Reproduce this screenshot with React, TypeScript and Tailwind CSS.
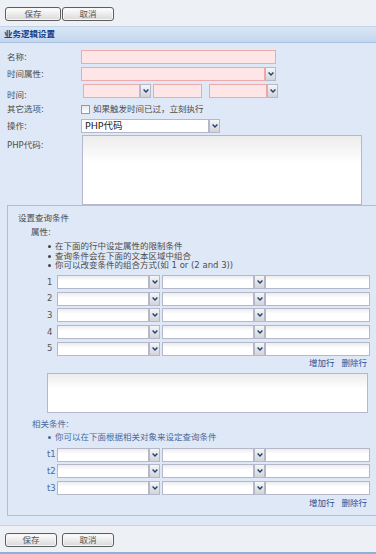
import React from 'react';

const FONT = { fontFamily: '"DejaVu Sans", "Noto Sans CJK SC", sans-serif' };

function Chevron() {
  return (
    <svg width="6" height="4" viewBox="0 0 6 4">
      <path d="M0.6 0.6 L3 3 L5.4 0.6" stroke="#1e3f7a" strokeWidth="1.4" fill="none" />
    </svg>
  );
}

function Trigger() {
  return (
    <div className="w-[11px] h-full shrink-0 bg-linear-to-b from-[#f6f6f6] to-[#d2d4d8] border border-[#b5b8c8] flex items-center justify-center">
      <Chevron />
    </div>
  );
}

function Field({ w, pink, className = '' }: { w: string; pink?: boolean; className?: string }) {
  return (
    <div
      className={`${w} h-full shrink-0 border ${pink ? 'bg-[#ffe6e6] border-[#eeaaaa]' : 'bg-linear-to-b from-[#ececec] to-white to-40% border-[#b5b8c8]'} ${className}`}
    />
  );
}

function Btn({ label, w }: { label: string; w: string }) {
  return (
    <button
      type="button"
      className={`${w} h-[14px] rounded-[3px] border border-[#5e5e5e] bg-linear-to-b from-white to-[#d9d9d9] text-[8.5px] leading-none text-[#555] flex items-center justify-center shadow-[inset_0_0_0_1px_#f6f6f6]`}
    >
      {label}
    </button>
  );
}

function Row({ n, blue }: { n: string; blue?: boolean }) {
  return (
    <div className="flex items-center h-[14px]">
      <span className={`w-[10px] text-[8.5px] ${blue ? 'text-[#4a6aa0]' : 'text-[#555]'}`}>{n}</span>
      <Field w="w-[92px]" />
      <Trigger />
      <div className="w-[2px]" />
      <Field w="w-[92px]" />
      <Trigger />
      <Field w="w-[105px]" />
    </div>
  );
}

function Links() {
  return (
    <div className="h-[12px] flex items-center justify-end gap-[7px] pr-[9px] text-[8.5px] text-[#2d4f8e]">
      <span>增加行</span>
      <span>删除行</span>
    </div>
  );
}

export default function App() {
  return (
    <div className="w-[376px] h-[554px] bg-[#dfe8f6] flex flex-col overflow-hidden text-[8.5px] text-[#4d4d4d]" style={FONT}>
      {/* toolbar */}
      <div className="h-[27px] shrink-0 bg-[#edf0f4] border-b border-[#c3d3e8] flex items-start pt-[7px] pl-[5px] gap-[1px]">
        <Btn label="保存" w="w-[56px]" />
        <Btn label="取消" w="w-[52px]" />
      </div>

      {/* header */}
      <div className="h-[16px] shrink-0 bg-linear-to-b from-[#dae6f5] to-[#c3d6ef] border-b border-[#a9c2e4] flex items-center pl-[4px] font-bold text-[#15428b]">
        业务逻辑设置
      </div>

      {/* form */}
      <div className="pl-[7px] flex flex-col">
        <div className="flex items-center h-[14px] mt-[7px]">
          <span className="w-[74px]">名称:</span>
          <Field w="w-[195px]" pink />
        </div>
        <div className="flex items-center h-[14px] mt-[3px]">
          <span className="w-[74px]">时间属性:</span>
          <Field w="w-[184px]" pink />
          <Trigger />
        </div>
        <div className="flex items-center h-[14px] mt-[3px]">
          <span className="w-[74px] pt-[9px]">时间:</span>
          <Field w="w-[57px] ml-[2px]" pink />
          <Trigger />
          <Field w="w-[49px] ml-[2px]" pink />
          <Field w="w-[58px] ml-[7px]" pink />
          <Trigger />
        </div>
        <div className="flex items-center h-[14px] mt-[4px]">
          <span className="w-[74px]">其它选项:</span>
          <div className="w-[9px] h-[9px] border border-[#9a9a9a] bg-linear-to-b from-[#e8e8e8] to-white" />
          <span className="ml-[3px]">如果触发时间已过，立刻执行</span>
        </div>
        <div className="flex items-center h-[14px] mt-[3px]">
          <span className="w-[74px]">操作:</span>
          <div className="w-[128px] h-full bg-white border border-[#b5b8c8] flex items-center pl-[3px] text-[9.5px] text-[#222]">
            PHP代码
          </div>
          <Trigger />
        </div>
        <div className="flex items-start h-[70px] mt-[2px]">
          <span className="w-[75px] pt-[4px]">PHP代码:</span>
          <Field w="w-[280px]" />
        </div>

        {/* fieldset */}
        <div className="border-l border-t border-b border-[#b0bdd2] pl-[10px] pb-[5px] flex flex-col">
          <div className="h-[12px] mt-[6px] flex items-center">设置查询条件</div>
          <div className="h-[12px] mt-[2px] flex items-center pl-[13px]">属性:</div>
          <ul className="mt-[4px] pl-[30px]">
            {['在下面的行中设定属性的限制条件', '查询条件会在下面的文本区域中组合', '你可以改变条件的组合方式(如 1 or (2 and 3))'].map(t => (
              <li key={t} className="h-[9.5px] flex items-center gap-[4px]">
                <span className="w-[3px] h-[3px] rounded-full bg-[#444]" />
                <span>{t}</span>
              </li>
            ))}
          </ul>
          <div className="mt-[4.5px] pl-[29px] flex flex-col gap-[2.7px]">
            {['1', '2', '3', '4', '5'].map(n => <Row key={n} n={n} />)}
          </div>
          <div className="mt-[2px]"><Links /></div>
          <div className="mt-[3px] ml-[29px] w-[321px] h-[40px]">
            <Field w="w-full" />
          </div>
          <div className="h-[12px] mt-[6px] flex items-center pl-[14px] text-[#4a6aa0]">相关条件:</div>
          <div className="h-[10px] mt-[2px] pl-[30px] flex items-center gap-[4px] text-[#4a6aa0]">
            <span className="w-[3px] h-[3px] rounded-full bg-[#4a6aa0]" />
            <span>你可以在下面根据相关对象来设定查询条件</span>
          </div>
          <div className="mt-[5px] pl-[29px] flex flex-col gap-[2.7px]">
            {['t1', 't2', 't3'].map(n => <Row key={n} n={n} blue />)}
          </div>
          <div className="mt-[2.6px]"><Links /></div>
        </div>
      </div>

      {/* footer */}
      <div className="mt-auto h-[29px] shrink-0 bg-[#edf0f4] border-t border-[#c3d3e8] border-b-2 border-b-[#8fb0d8] flex items-start pt-[7px] pl-[5px] gap-[5px]">
        <Btn label="保存" w="w-[52px]" />
        <Btn label="取消" w="w-[52px]" />
      </div>
    </div>
  );
}
